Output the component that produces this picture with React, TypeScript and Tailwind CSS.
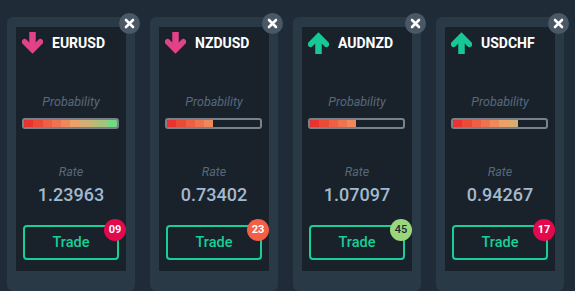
import React from 'react';

type Pair = {
  symbol: string;
  dir: 'up' | 'down';
  level: number;
  rate: string;
  count: string;
  badge: string;
};

const pairs: Pair[] = [
  { symbol: 'EURUSD', dir: 'down', level: 10, rate: '1.23963', count: '09', badge: 'bg-[#e2094c] text-white' },
  { symbol: 'NZDUSD', dir: 'down', level: 5, rate: '0.73402', count: '23', badge: 'bg-[#f45f45] text-white' },
  { symbol: 'AUDNZD', dir: 'up', level: 5, rate: '1.07097', count: '45', badge: 'bg-[#9ad67c] text-[#1d2a35] font-medium' },
  { symbol: 'USDCHF', dir: 'up', level: 7, rate: '0.94267', count: '17', badge: 'bg-[#e2094c] text-white' },
];

const segColors = [
  'bg-[#e8332e]',
  'bg-[#eb4a39]',
  'bg-[#ee5f45]',
  'bg-[#ef7350]',
  'bg-[#ef895b]',
  'bg-[#eda067]',
  'bg-[#d6ad72]',
  'bg-[#c1b877]',
  'bg-[#a4c47b]',
  'bg-[#72d984]',
];

function Arrow({ dir }: { dir: 'up' | 'down' }) {
  const color = dir === 'down' ? '#e4418b' : '#17c896';
  return (
    <svg width="21" height="22" viewBox="0 0 21 22" className={dir === 'up' ? 'rotate-180' : ''}>
      <path d="M10.5 0 V17" stroke={color} strokeWidth="6.5" fill="none" />
      <path d="M2.6 9.8 L10.5 17.8 L18.4 9.8" stroke={color} strokeWidth="5.6" strokeLinecap="round" strokeLinejoin="miter" fill="none" />
    </svg>
  );
}

function Card({ p }: { p: Pair }) {
  return (
    <div className="relative w-[128px] shrink-0 rounded-[6px] bg-[#2a3946] px-[9px] pt-[10px] pb-[9px]">
      <button className="absolute -right-[5px] -top-[4px] flex h-[21px] w-[21px] items-center justify-center rounded-full bg-[#4a5866]">
        <svg width="11" height="11" viewBox="0 0 11 11">
          <path d="M2 2 L9 9 M9 2 L2 9" stroke="#ffffff" strokeWidth="2.6" strokeLinecap="round" />
        </svg>
      </button>
      <div className="flex h-[244px] flex-col bg-[#19222b]">
        <div className="mt-[5px] flex items-center pl-[6px]">
          <Arrow dir={p.dir} />
          <span className="ml-[9px] text-[14px] font-bold text-white">{p.symbol}</span>
        </div>
        <div className="mt-[42px] text-center text-[12.5px] italic leading-none text-[#56687a]">Probability</div>
        <div className="mx-[6px] mt-[9px] flex h-[11px] w-[97px] overflow-hidden rounded-[3px] border-2 border-[#7b8189] bg-[#19222b]">
          {segColors.slice(0, p.level).map((c, i) => (
            <div key={i} className={`h-full w-[9.3px] ${c}`} />
          ))}
        </div>
        <div className="mt-[37px] text-center text-[12.5px] italic leading-none text-[#56687a]">Rate</div>
        <div className="mt-[8px] text-center text-[18px] font-medium leading-none text-[#a3b9cd]">{p.rate}</div>
        <div className="relative mx-[7px] mt-[21px] flex h-[35px] w-[96px] items-center justify-center rounded-[4px] border-2 border-[#18cf98] text-[14.5px] font-medium text-[#18cf98]">
          Trade
          <span className={`absolute -right-[9px] -top-[8px] flex h-[22px] w-[22px] items-center justify-center rounded-full text-[11px] font-bold ${p.badge}`}>
            {p.count}
          </span>
        </div>
      </div>
    </div>
  );
}

export default function App() {
  return (
    <div className="flex h-[291px] w-[575px] gap-[15px] bg-[#1f2b37] pl-[7px] pt-[17px]" style={{ fontFamily: 'Roboto, "Liberation Sans", sans-serif' }}>
      {pairs.map(p => (
        <Card key={p.symbol} p={p} />
      ))}
    </div>
  );
}
